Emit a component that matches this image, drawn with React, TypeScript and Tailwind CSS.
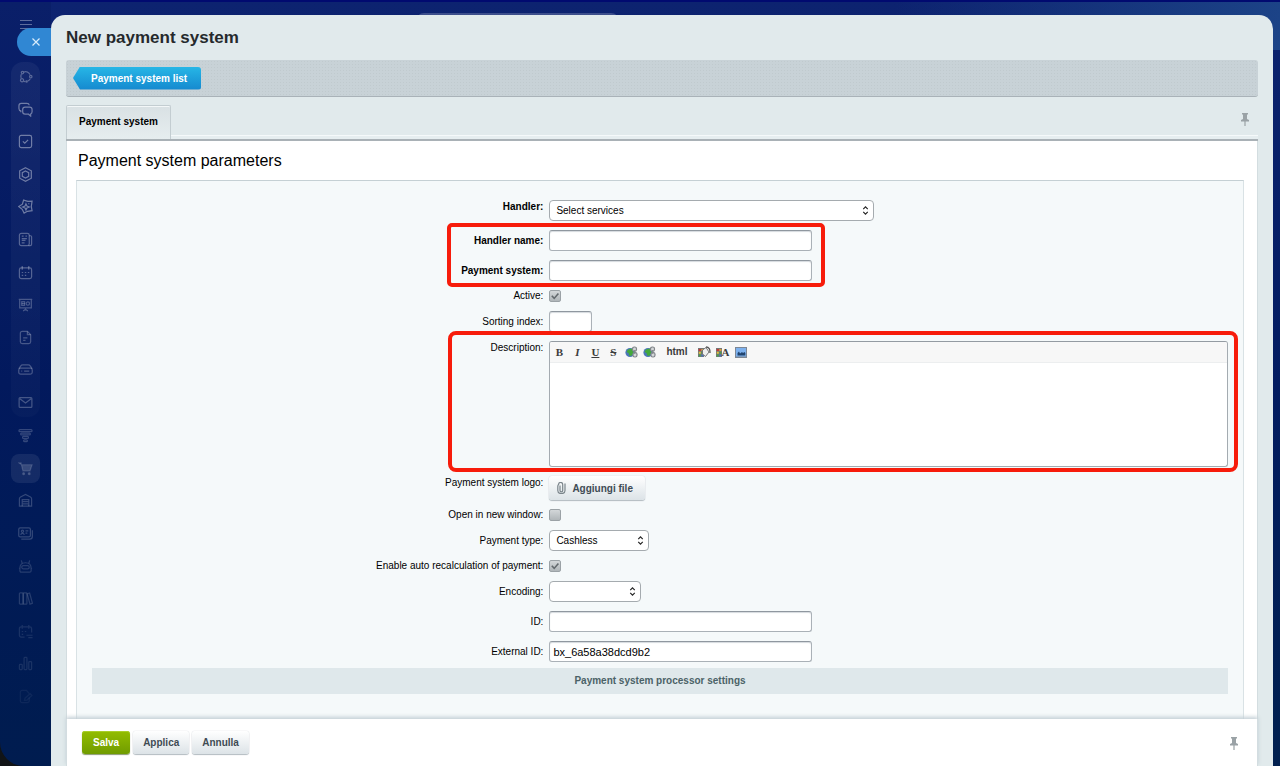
import type { ReactNode } from 'react';
import clsx from 'clsx';

const topIcons = [
  {
    name: 'Feed',
    tone: 'text-white/30',
    art: (
      <>
        <path d="M6.200 3.200A5.200 5.200 0 0 1 12.800 6M13 10.300a5.500 5.500 0 0 1-2.500 2.500M7.800 13.600l-1.500-.4M3.400 9.600A5.200 5.200 0 0 1 3.600 5.300" />
        <circle cx="4.800" cy="3.800" r="1.300" />
        <circle cx="13.600" cy="8.200" r="1.300" />
        <circle cx="4.300" cy="12" r="1.700" />
        <circle cx="9.200" cy="13.300" r=".7" />
      </>
    ),
  },
  {
    name: 'Messenger',
    tone: 'text-white/40',
    art: (
      <>
        <path d="M3 11V9.500C1.600 9.300 1 8.500 1 7V4c0-1.700.8-2.500 2.500-2.500h6c1.500 0 2.300.6 2.500 2" />
        <path d="M7.500 5.500h5c1.700 0 2.500.8 2.500 2.500v2.500c0 1.200-.5 2-1.500 2.300V15l-2.300-2H7.500C5.800 13 5 12.200 5 10.500V8c0-1.700.8-2.500 2.500-2.500z" />
      </>
    ),
  },
  {
    name: 'Tasks',
    tone: 'text-white/40',
    art: (
      <>
        <rect x="1.500" y="1.500" width="13" height="13" rx="2" />
        <path d="m5.200 7.800 2 2 3.600-3.600" />
      </>
    ),
  },
  {
    name: 'CRM',
    tone: 'text-white/40',
    art: (
      <>
        <path d="M8 .8 14.200 4v8L8 15.200 1.800 12V4z" />
        <path d="m8 4.200 3.400 1.900v3.800L8 11.800 4.600 9.900V6.100z" />
      </>
    ),
  },
  {
    name: 'CoPilot',
    tone: 'text-white/40',
    art: (
      <>
        <path d="M6 1.200 10.500 2.500 15 2.200 14.200 8l.8 4.500-5 .6L6.500 15l-2-4L.8 8l3.900-2.500z" />
        <path d="M8.500 5.200 9.500 7.500 12 8.500 9.500 9.500 8.500 11.800 7.500 9.500 5 8.500 7.500 7.500z" />
        <path d="M11.500 4.500v1" />
      </>
    ),
  },
  {
    name: 'News',
    tone: 'text-white/30',
    art: (
      <>
        <rect x="1.500" y="1.500" width="10.500" height="13" rx="2" />
        <path d="M12 4h1.500c.7 0 1 .4 1 1v8c0 1-.6 1.500-1.500 1.500h-2M4 4.500h2M8 4.500h1.500M4 7h5.500M4 9h4M4 11.500h3" />
      </>
    ),
  },
  {
    name: 'Calendar',
    tone: 'text-white/30',
    art: (
      <>
        <rect x="1.500" y="3" width="13" height="11.500" rx="2" />
        <path d="M4.500 1v4M11.500 1v4M4 8h1.500M7.300 8h1.500M10.500 8H12M4 11h1.500M7.300 11h1.500" />
      </>
    ),
  },
  {
    name: 'Boards',
    tone: 'text-white/25',
    art: (
      <>
        <path d="M.8 2.500h14.400M1.800 2.500v9h12.400v-9M8 11.500V13M5.500 15 8 13l2.500 2" />
        <rect x="4" y="5" width="3" height="4" />
        <circle cx="10.500" cy="7" r="1.800" />
        <path d="M4 7h3" />
      </>
    ),
  },
  {
    name: 'Documents',
    tone: 'text-white/25',
    art: (
      <>
        <path d="M10 1.500H4.500C3.200 1.500 2.500 2.200 2.500 3.500v9c0 1.300.7 2 2 2h7c1.300 0 2-.7 2-2V5z" />
        <path d="M10 1.500V5h3.500M5.500 8.300H10M5.500 11H8" />
      </>
    ),
  },
  {
    name: 'Drive',
    tone: 'text-white/25',
    art: (
      <>
        <path d="m1 7 2-2.800C3.400 3.400 4 3 5 3h6c1 0 1.600.4 2 1.200L15 7" />
        <rect x=".8" y="6.500" width="14.400" height="6.500" rx="2" />
        <path d="M3.500 9.800h1M6.500 9.800H12" />
      </>
    ),
  },
  {
    name: 'Mail',
    tone: 'text-white/25',
    art: (
      <>
        <rect x="1.200" y="2.800" width="13.600" height="10.400" rx="1" />
        <path d="m2 4 6 4.500L14 4" />
      </>
    ),
  },
];

const bottomIcons = [
  {
    name: 'Workgroups',
    tone: 'text-white/20',
    art: (
      <>
        <rect x="1" y="1.800" width="14" height="2" rx="1" />
        <rect x="2.800" y="5.400" width="10.400" height="2" rx="1" />
        <rect x="4.800" y="9" width="6.400" height="2" rx="1" />
        <rect x="6" y="12.600" width="4" height="2" rx="1" />
      </>
    ),
  },
  {
    name: 'Shop',
    tone: 'text-white/15',
    active: true,
    art: (
      <>
        <path d="M.8 2h2.400l2 8.500h7.600L15 4H3.800z" fill="currentColor" />
        <circle cx="6" cy="13.500" r="1" fill="currentColor" />
        <circle cx="12" cy="13.500" r="1" fill="currentColor" />
      </>
    ),
  },
  {
    name: 'Inventory',
    tone: 'text-white/20',
    art: (
      <>
        <path d="M1.500 14V6.200c0-1 .4-1.500 1.200-2L8 1.500l5.300 2.700c.8.500 1.200 1 1.200 2V14z" />
        <path d="M4.500 14V7h7v7M4.500 9.300h7M4.500 11.600h7" />
      </>
    ),
  },
  {
    name: 'Contacts',
    tone: 'text-white/20',
    art: (
      <>
        <rect x=".8" y="2" width="12.400" height="9.500" rx="1.500" />
        <path d="M3.500 14h9c2 0 2.800-.8 2.800-2.800V4.500M8 5.200h3M8 7.500h2" />
        <circle cx="4.800" cy="5.500" r="1.200" />
        <path d="M2.800 9.300c.6-2 3.400-2 4 0" />
      </>
    ),
  },
  {
    name: 'Robots',
    tone: 'text-white/15',
    art: (
      <>
        <path d="M3.500 1.500 4.500 4.500M12.500 1.500l-1 3" />
        <path d="M2 10c0-4 2.300-6 6-6s6 2 6 6v2.500c0 1-.5 1.500-1.500 1.500h-9C2.500 14 2 13.500 2 12.500zM1 10h1M14 10h1" />
        <rect x="4" y="7" width="8" height="3.500" rx="1.700" />
      </>
    ),
  },
  {
    name: 'Knowledge base',
    tone: 'text-white/15',
    art: (
      <>
        <rect x="1.500" y="2" width="4" height="12" rx=".8" />
        <rect x="5.500" y="2" width="4" height="12" rx=".8" />
        <path d="m9.800 3 2.600-.8 3 11-2.600.8z" />
      </>
    ),
  },
  {
    name: 'Booking',
    tone: 'text-white/10',
    art: (
      <>
        <path d="M7 14H3.500c-1.300 0-2-.7-2-2V5c0-1.300.7-2 2-2h9c1.300 0 2 .7 2 2v4M4.500 1v4M11.500 1v4M4 8h1.500M7.300 8h1.500M4 11h1.500M9 12h6.500M11 14.500h4.500" />
      </>
    ),
  },
  {
    name: 'Analytics',
    tone: 'text-white/10',
    art: (
      <>
        <rect x="1.500" y="9" width="3" height="5.500" rx=".8" />
        <rect x="6.500" y="1.500" width="3" height="13" rx=".8" />
        <rect x="11.500" y="6" width="3" height="8.500" rx=".8" />
      </>
    ),
  },
  {
    name: 'Sign',
    tone: 'text-white/5',
    art: (
      <>
        <path d="M12 9v3.500c0 1.300-.7 2-2 2H4.500c-1.300 0-2-.7-2-2v-9c0-1.300.7-2 2-2H9L12 5" />
        <path d="m7 12 .5-2.200L13 5l1.800 1.800-5.300 5z" />
      </>
    ),
  },
];

type MenuItem = { name: string; tone: string; art: ReactNode; active?: boolean };

function MenuLink({ item }: { item: MenuItem }) {
  return (
    <li>
      <a href="#" aria-label={item.name} className={clsx('relative block size-[15px]', item.tone)}>
        {item.active && <span className="absolute -inset-[7px] rounded-lg bg-white/8" />}
        <svg viewBox="0 0 16 16" className="relative size-[15px]" fill="none" stroke="currentColor" strokeWidth="1.300">
          {item.art}
        </svg>
      </a>
    </li>
  );
}

function Pin() {
  return (
    <svg viewBox="0 0 8 13" className="h-[13px] w-2" fill="#9aa2a6">
      <path d="M1 0h6v1.500H6V6l2 1v1.500H4.600V13H3.400V8.500H0V7l2-1V1.500H1z" />
    </svg>
  );
}

function Row({ label, id, bold, top, children }: { label: string; id: string; bold?: boolean; top?: boolean; children: ReactNode }) {
  return (
    <div className={clsx('grid grid-cols-[2fr_3fr] pt-[5px] pb-1', top ? 'items-start' : 'items-center')}>
      <label htmlFor={id} className={clsx('pr-[3px] text-right', top ? 'leading-[14px]' : 'leading-3', bold && 'font-bold')}>
        {label}
      </label>
      <div className="flex min-w-0 pl-[3px]">{children}</div>
    </div>
  );
}

function TextInput({ id, value, width = 'w-[263px]' }: { id: string; value?: string; width?: string }) {
  return (
    <input
      id={id}
      type="text"
      defaultValue={value}
      className={clsx(
        'h-[21px] rounded-[3px] border border-[#aab1b7] border-t-[#8f979f] bg-white px-[3px] text-[11px] shadow-[inset_0_1px_1px_#d5dade]',
        width,
      )}
    />
  );
}

function Select({ id, option, width }: { id: string; option: string; width: string }) {
  return (
    <div className={clsx('relative', width)}>
      <select id={id} className="block h-[21px] w-full appearance-none rounded-[4px] border border-[#a5abaf] bg-white px-1.5 text-black">
        <option>{option}</option>
      </select>
      <svg viewBox="0 0 7 10" className="pointer-events-none absolute top-[6px] right-[5px] h-[9px] w-[7px]" fill="none" stroke="#222" strokeWidth="1.300">
        <path d="M1 3.500 3.500 1 6 3.500M1 6.500 3.500 9 6 6.500" />
      </svg>
    </div>
  );
}

function Checkbox({ id, checked }: { id: string; checked?: boolean }) {
  return (
    <span className="relative block size-3">
      <input
        id={id}
        type="checkbox"
        defaultChecked={checked}
        className="peer block size-3 appearance-none rounded-[2px] border border-[#9ba2a6] bg-linear-to-b from-[#d3d7d9] to-[#b0b6b9]"
      />
      <svg viewBox="0 0 12 12" className="pointer-events-none absolute inset-0 hidden size-3 peer-checked:block" fill="none" stroke="#62696d" strokeWidth="1.600">
        <path d="m2.800 5.800 2.400 2.600 4.200-4.900" />
      </svg>
    </span>
  );
}

// Globe with chain, used for both "insert link" and "remove link"
function LinkIcon() {
  return (
    <svg viewBox="0 0 13 12" className="h-3 w-[13px]">
      <circle cx="5" cy="6.500" r="4.600" fill="#4b76b8" />
      <path d="M3 3.500 6.500 2.500 8.500 6 7 9.500 4.500 10 3.500 7 1.500 6z" fill="#43a83c" />
      <g fill="#d3d6d8" stroke="#808589" strokeWidth="1.200">
        <rect x="7.500" y="1" width="4" height="4.200" rx="1.800" />
        <rect x="8" y="6.500" width="4" height="4.500" rx="1.800" />
        <path d="M9.800 4v4" />
      </g>
    </svg>
  );
}

function Palette() {
  return (
    <>
      <path d="M0 2h6v9H0z" fill="#777" />
      <path d="M.8 3h2v2h-2z" fill="#c33" />
      <path d="M3.400 3h2v2h-2z" fill="#d8a33a" />
      <path d="M.8 5.700h2v2h-2z" fill="#e2c23c" />
      <path d="M3.400 5.700h2v2h-2z" fill="#4b9d46" />
      <path d="M.8 8.400h2v2h-2z" fill="#46a350" />
      <path d="M3.400 8.400h2v2h-2z" fill="#4870bd" />
    </>
  );
}

const toolButton = 'flex h-3 w-[18px] items-center justify-center font-["Liberation_Serif",serif] text-[11px] leading-3 font-bold text-[#3c3c3c]';

function Editor() {
  return (
    <div className="flex h-[126px] w-full flex-col overflow-hidden rounded-[3px] border border-[#a4abb1] border-t-[#949ba2] bg-white">
      <div className="flex h-[21px] shrink-0 items-center border-b border-[#eceeef] bg-[#f7f7f7]">
        <button type="button" className={toolButton}>B</button>
        <button type="button" className={clsx(toolButton, 'italic')}>I</button>
        <button type="button" className={clsx(toolButton, 'underline')}>U</button>
        <button type="button" className={clsx(toolButton, 'line-through')}>S</button>
        <button type="button" aria-label="Link" className={toolButton}><LinkIcon /></button>
        <button type="button" aria-label="Remove link" className={toolButton}><LinkIcon /></button>
        <button type="button" className="mx-2 h-3 leading-3 font-bold text-[#3c3c3c]">html</button>
        <button type="button" aria-label="Background color" className={toolButton}>
          <svg viewBox="0 0 13 12" className="h-3 w-[13px]">
            <Palette />
            <path d="M4.500 4 8 1.500l3 4.500-3.500 4.500L4.500 8z" fill="#eee" stroke="#777" />
            <path d="M8 1c3 0 4.300 2.500 4 6" fill="none" stroke="#555" strokeWidth="1.300" />
          </svg>
        </button>
        <button type="button" aria-label="Text color" className={toolButton}>
          <svg viewBox="0 0 6 12" className="h-3 w-[6px] shrink-0"><Palette /></svg>
          <span>A</span>
        </button>
        <button type="button" aria-label="Image" className={toolButton}>
          <svg viewBox="0 0 12 11" className="h-[11px] w-3">
            <path d="M0 0h12v11H0z" fill="#7d8794" />
            <path d="M1 1h10v8.500H1z" fill="#7db1ee" />
            <path d="M2.500 8.500V6L4 4.500 5 6.500 7 5l1 1 1.500-1 .8 1v2.500z" fill="#21446f" />
          </svg>
        </button>
      </div>
      <textarea id="description" className="w-full flex-1 resize-none outline-none" />
    </div>
  );
}

const grayButton =
  'rounded-[3px] bg-linear-to-b from-white to-[#dce3e7] font-bold text-[#3f4b54] shadow-[0_1px_1px_#b2bbc0,0_0_1px_#b2bbc0]';

export default function App() {
  return (
    <div className="h-screen bg-[#111416]">
      <div className='relative flex h-full overflow-hidden rounded-bl-[24px] border-t-2 border-[#010a70] bg-linear-to-b from-[#0d2370] via-[#031c61] to-[#01204f] pr-[7px] font-["Liberation_Sans",Arial,sans-serif] text-[10px] text-black'>
        {/* Page behind the slider: lit corner and the top of the search box */}
        <div className="absolute top-0 right-0 h-12 w-96 bg-linear-to-l from-[#1c4387] to-[#1c4387]/0" />
        <div className="absolute top-[11px] left-[416px] h-6 w-[203px] rounded-lg bg-white/20" />

        <nav className="flex w-[51px] shrink-0 flex-col items-center bg-[#02104f]/20 pt-[18px]">
          <button type="button" aria-label="Menu" className="text-white/35">
            <svg viewBox="0 0 12 9" className="h-[9px] w-3" stroke="currentColor">
              <path d="M0 .5h12M0 4.500h12M0 8.500h12" />
            </svg>
          </button>
          <ul className="mt-[33px] flex h-[355px] w-[29px] shrink-0 flex-col items-center justify-between rounded-xl bg-linear-to-b from-white/5 to-white/2 py-[7px]">
            {topIcons.map((item) => (
              <MenuLink key={item.name} item={item} />
            ))}
          </ul>
          <ul className="mt-[11px] flex h-[276px] shrink-0 flex-col items-center justify-between">
            {bottomIcons.map((item) => (
              <MenuLink key={item.name} item={item} />
            ))}
          </ul>
        </nav>

        <button type="button" aria-label="Close" className="absolute top-[26px] left-[17px] flex h-7 w-[34px] items-center justify-center rounded-l-full bg-[#3087d3] pl-[3px]">
          <svg viewBox="0 0 8 8" className="size-2" stroke="#d9ecfb" strokeWidth="1.200">
            <path d="m.5.5 7 7M7.500.5l-7 7" />
          </svg>
        </button>

        <main className="relative mt-[13px] flex min-w-0 flex-1 flex-col rounded-t-[14px] bg-[#e1eaec] px-[15px]">
          <h1 className="pt-3 text-[17px] leading-[22px] font-bold text-[#25292c]">New payment system</h1>

          <div className="mt-[11px] flex h-[37px] shrink-0 items-center rounded-[3px] border-b border-[#a9b2b8] bg-[#c8d2d7] bg-[radial-gradient(#c0cace_1px,transparent_1px)] bg-[length:3px_3px] pl-[7px]">
            <a
              href="#"
              className="flex h-[23px] items-center rounded-[3px] bg-linear-to-b from-[#27b6e6] to-[#1689cf] pr-[14px] pl-[18px] font-bold text-white [clip-path:polygon(0_50%,7px_0,100%_0,100%_100%,7px_100%)]"
            >
              Payment system list
            </a>
          </div>

          <div className="mt-2 flex h-[36px] shrink-0 border-b-2 border-[#a9b1b6]">
            <button type="button" className="h-full rounded-t-[2px] border border-b-0 border-[#c3cdd1] bg-linear-to-b from-[#d9e1e4] to-[#e6edef] px-3 pb-0.5 font-bold shadow-[inset_0_1px_0_#f3f7f8]">
              Payment system
            </button>
            <div className="mt-[30px] flex-1 border-t border-[#f5f9fa] bg-[#e6eef0]" />
            <button type="button" aria-label="Pin tabs" className="absolute top-[98px] right-[24px]">
              <Pin />
            </button>
          </div>

          <div className="flex min-h-0 flex-1 flex-col border-x border-[#d3dde0] bg-white">
            <h2 className="pt-[10px] pl-[11px] text-base leading-5">Payment system parameters</h2>
            <form className="mt-[9px] mr-[13px] ml-[9px] min-h-0 flex-1 overflow-hidden border border-b-0 border-[#d9e2e5] border-t-[#c5d0d4] bg-[#f5f9fa] px-[15px] pt-[14px]">
              <Row label="Handler:" id="handler" bold top>
                <Select id="handler" option="Select services" width="w-[325px]" />
              </Row>

              <div className="relative">
                <Row label="Handler name:" id="handler-name" bold>
                  <TextInput id="handler-name" />
                </Row>
                <Row label="Payment system:" id="payment-system" bold>
                  <TextInput id="payment-system" />
                </Row>
                <div className="pointer-events-none absolute -inset-y-0.5 left-[calc(40%-99px)] w-[378px] rounded-[5px] border-4 border-[#f71c0b]" />
              </div>

              <Row label="Active:" id="active">
                <Checkbox id="active" checked />
              </Row>
              <Row label="Sorting index:" id="sort">
                <TextInput id="sort" width="w-[43px]" />
              </Row>

              <div className="relative">
                <Row label="Description:" id="description" top>
                  <Editor />
                </Row>
                <div className="pointer-events-none absolute -top-[5px] -right-[10px] -bottom-px left-[calc(40%-98px)] rounded-[8px] border-4 border-[#f71c0b]" />
              </div>

              <Row label="Payment system logo:" id="logo" top>
                <button id="logo" type="button" className={clsx(grayButton, 'flex h-6 items-center gap-1.5 px-2 pr-3')}>
                  <svg viewBox="0 0 9 12" className="h-3 w-[9px]" fill="none" stroke="#7b858b" strokeWidth="1.200">
                    <path d="M3 3.500v5a1.300 1.300 0 0 0 2.700 0V2.600a2 2 0 0 0-4.100-.2C1 3 .8 3.500.8 4.500V8.500a3.500 3 0 0 0 7.200 0V1.500" />
                  </svg>
                  Aggiungi file
                </button>
              </Row>
              <Row label="Open in new window:" id="new-window">
                <Checkbox id="new-window" />
              </Row>
              <Row label="Payment type:" id="payment-type">
                <Select id="payment-type" option="Cashless" width="w-[100px]" />
              </Row>
              <Row label="Enable auto recalculation of payment:" id="recalc">
                <Checkbox id="recalc" checked />
              </Row>
              <Row label="Encoding:" id="encoding">
                <Select id="encoding" option="" width="w-[92px]" />
              </Row>
              <Row label="ID:" id="ps-id">
                <TextInput id="ps-id" />
              </Row>
              <Row label="External ID:" id="external-id">
                <TextInput id="external-id" value="bx_6a58a38dcd9b2" />
              </Row>

              <h3 className="mt-0.5 bg-[#dfe8eb] text-center leading-[26px] font-bold text-[#4b6267]">
                Payment system processor settings
              </h3>
            </form>
          </div>

          <footer className="relative flex h-[47px] shrink-0 items-start gap-[3px] border-x border-[#d3dde0] bg-white pt-3 pr-[19px] pl-[15px] shadow-[0_-2px_4px_#c3cfd5]">
            <button type="button" className="h-[23px] rounded-[3px] bg-linear-to-b from-[#93bd00] to-[#709c00] px-[11px] font-bold text-white shadow-[inset_0_1px_0_#a9cf2a,0_1px_1px_#8a9a70]">
              Salva
            </button>
            <button type="button" className={clsx(grayButton, 'h-[23px] px-[10px]')}>Applica</button>
            <button type="button" className={clsx(grayButton, 'h-[23px] px-[10px]')}>Annulla</button>
            <button type="button" aria-label="Pin buttons" className="mt-[6px] ml-auto">
              <Pin />
            </button>
          </footer>
        </main>
      </div>
    </div>
  );
}
